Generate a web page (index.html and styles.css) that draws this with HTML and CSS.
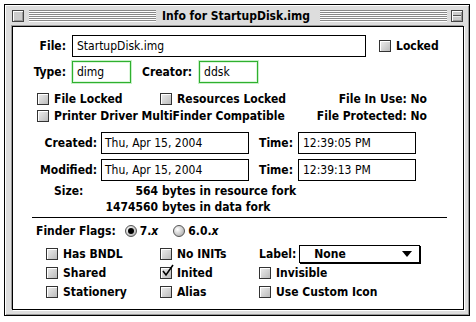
FILE: index.html
```html
<!DOCTYPE html>
<html lang="en">
<head>
  <meta charset="UTF-8" />
  <title>Info for StartupDisk.img</title>
  <link rel="stylesheet" href="styles.css">
</head>
<body>

<div class="window">
  <div class="titlebar">
    <span class="closebox"></span>
    <span class="stripes"></span>
    <span class="title">Info for StartupDisk.img</span>
    <span class="stripes"></span>
    <span class="shadebox"></span>
  </div>

  <div class="content">
    <div class="row row-file">
      <span class="lbl lbl-main">File:</span>
      <span class="field field-file">StartupDisk.img</span>
      <span class="check check-locked"><span class="box"></span>Locked</span>
    </div>

    <div class="row row-type">
      <span class="lbl lbl-main">Type:</span>
      <span class="field field-code">dimg</span>
      <span class="lbl lbl-creator">Creator:</span>
      <span class="field field-code">ddsk</span>
    </div>

    <div class="opts">
      <div class="opt-row">
        <span class="check opt-col1"><span class="box"></span>File Locked</span>
        <span class="check"><span class="box"></span>Resources Locked</span>
        <span class="note">File In Use: No</span>
      </div>
      <div class="opt-row">
        <span class="check"><span class="box"></span>Printer Driver MultiFinder Compatible</span>
        <span class="note">File Protected: No</span>
      </div>
    </div>

    <div class="row row-date first">
      <span class="lbl lbl-date">Created:</span>
      <span class="field field-date">Thu, Apr 15, 2004</span>
      <span class="lbl lbl-time">Time:</span>
      <span class="field field-time">12:39:05 PM</span>
    </div>
    <div class="row row-date">
      <span class="lbl lbl-date">Modified:</span>
      <span class="field field-date">Thu, Apr 15, 2004</span>
      <span class="lbl lbl-time">Time:</span>
      <span class="field field-time">12:39:13 PM</span>
    </div>

    <div class="size">
      <span>Size:</span>
      <span class="num">564</span>
      <span>bytes in resource fork</span>
      <span></span>
      <span class="num">1474560</span>
      <span>bytes in data fork</span>
    </div>

    <div class="sep"></div>

    <div class="row row-flags">
      <span>Finder Flags:</span>
      <span class="radio on"></span>
      <span class="radio-text">7.<i>x</i></span>
      <span class="radio second"></span>
      <span class="radio-text">6.0.<i>x</i></span>
    </div>

    <div class="flags">
      <span class="check"><span class="box"></span>Has BNDL</span>
      <span class="check"><span class="box"></span>No INITs</span>
      <span class="popup-wrap">Label:
        <span class="popup">None<span class="arrow"></span></span>
      </span>

      <span class="check"><span class="box"></span>Shared</span>
      <span class="check"><span class="box">
        <svg class="tick" width="14" height="14" viewBox="0 0 14 14">
          <path d="M2 7 L5 11 L12 1" fill="none" stroke="#000" stroke-width="1.6"/>
        </svg>
      </span>Inited</span>
      <span class="check"><span class="box"></span>Invisible</span>

      <span class="check"><span class="box"></span>Stationery</span>
      <span class="check"><span class="box"></span>Alias</span>
      <span class="check"><span class="box"></span>Use Custom Icon</span>
    </div>
  </div>
</div>

</body>
</html>
```

FILE: styles.css
```css
html, body {
  margin: 0; padding: 0;
  background: #fff; color: #000;
  font-family: "DejaVu Sans Condensed", "DejaVu Sans", sans-serif;
  font-size: 12px;
  font-weight: bold;
}
.window {
  margin: 4px 0 0 4px;
  width: 466px;
  height: 312px;
  box-sizing: border-box;
  border: 1px solid #000;
  background: #ddd;
  padding: 0 5px 5px 7px;
  box-shadow: inset 1px 1px 0 #fff, inset -1px -1px 0 #999;
}
.titlebar {
  height: 21px;
  display: flex;
  align-items: center;
}
.closebox, .shadebox {
  width: 12px;
  height: 12px;
  box-sizing: border-box;
  border: 1px solid #444;
  background: #ccc;
  box-shadow: inset 1px 1px 0 #fff, inset -1px -1px 0 #999;
}
.shadebox {
  margin-left: 4px;
  margin-right: 1px;
  background: linear-gradient(to bottom, #ccc 0 4px, #555 4px 5px, #eee 5px 6px, #ccc 6px);
}
.stripes {
  flex: 1;
  height: 12px;
  margin-left: 4px;
  background: repeating-linear-gradient(to bottom, #888 0 1px, #fff 1px 2px);
}
.closebox + .stripes { margin-left: 5px; }
.title {
  padding: 0 6px;
  font-size: 12px;
}
.content {
  height: 284px;
  box-sizing: border-box;
  border: 1px solid #000;
  background: #fff;
  box-shadow: -1px -1px 0 #999, 1px 1px 0 #fff;
}
.row {
  display: flex;
  align-items: center;
}
.row-file { height: 22px; margin-top: 8px; }
.row-type { height: 22px; margin-top: 4px; }
.lbl-main {
  width: 53px;
  margin-right: 6px;
  text-align: right;
}
.field {
  height: 22px;
  box-sizing: border-box;
  border: 1px solid #000;
  padding: 0 4px;
  display: flex;
  align-items: center;
  font-weight: normal;
  white-space: nowrap;
}
.field-file { width: 294px; }
.field-code {
  width: 59px;
  border-color: #2fb02f;
  box-shadow: 0 0 0 1px #c8f0c8, inset 0 0 0 1px #dcf6dc;
}
.lbl-creator { margin: 0 7px 0 11px; }
.check {
  display: flex;
  align-items: center;
  gap: 5px;
  white-space: nowrap;
}
.check-locked { margin-left: 13px; }
.box {
  position: relative;
  width: 12px;
  height: 12px;
  box-sizing: border-box;
  border: 1px solid #333;
  background: linear-gradient(135deg, #eee, #bbb);
  box-shadow: inset 1px 1px 0 #fff;
  flex: none;
}
.tick {
  position: absolute;
  left: 0;
  top: -4px;
}
.opts { margin-top: 7px; padding: 0 36px 0 24px; }
.opt-row {
  height: 17px;
  display: flex;
  align-items: center;
}
.opt-col1 { width: 123px; }
.note { margin-left: auto; }
.row-date { height: 22px; margin-top: 5px; }
.row-date.first { margin-top: 8px; }
.lbl-date {
  width: 84px;
  margin-right: 4px;
  text-align: right;
}
.field-date { width: 148px; padding-left: 3px; }
.lbl-time {
  width: 44px;
  margin-right: 5px;
  text-align: right;
}
.field-time { width: 118px; }
.size {
  margin-top: 2px;
  padding-left: 41px;
  display: grid;
  grid-template-columns: 44px 56px auto;
  column-gap: 4px;
  line-height: 16px;
}
.num { text-align: right; }
.sep {
  margin: 2px 16px 0 19px;
  border-top: 1px solid #000;
}
.row-flags {
  height: 16px;
  margin-top: 5px;
  padding-left: 23px;
}
.radio {
  width: 12px;
  height: 12px;
  box-sizing: border-box;
  border-radius: 50%;
  border: 1px solid #555;
  background: radial-gradient(circle at 35% 35%, #fff, #bbb 70%, #999);
  margin-left: 9px;
  position: relative;
}
.radio.second { margin-left: 15px; }
.radio.on::after {
  content: "";
  position: absolute;
  left: 2px; top: 2px;
  width: 6px; height: 6px;
  border-radius: 50%;
  background: #000;
}
.radio-text { margin-left: 3px; }
.flags {
  margin-top: 5px;
  padding-left: 33px;
  display: grid;
  grid-template-columns: 114px 99px auto;
  grid-auto-rows: 19px;
  align-items: center;
}
.popup-wrap {
  display: flex;
  align-items: center;
}
.popup {
  margin-left: 3px;
  width: 121px;
  height: 18px;
  box-sizing: border-box;
  border: 1px solid #000;
  box-shadow: 1px 1px 0 #000;
  padding-left: 14px;
  display: flex;
  align-items: center;
  position: relative;
}
.arrow {
  margin-left: auto;
  margin-right: 7px;
  width: 0; height: 0;
  border-left: 5px solid transparent;
  border-right: 5px solid transparent;
  border-top: 6px solid #000;
}
```
